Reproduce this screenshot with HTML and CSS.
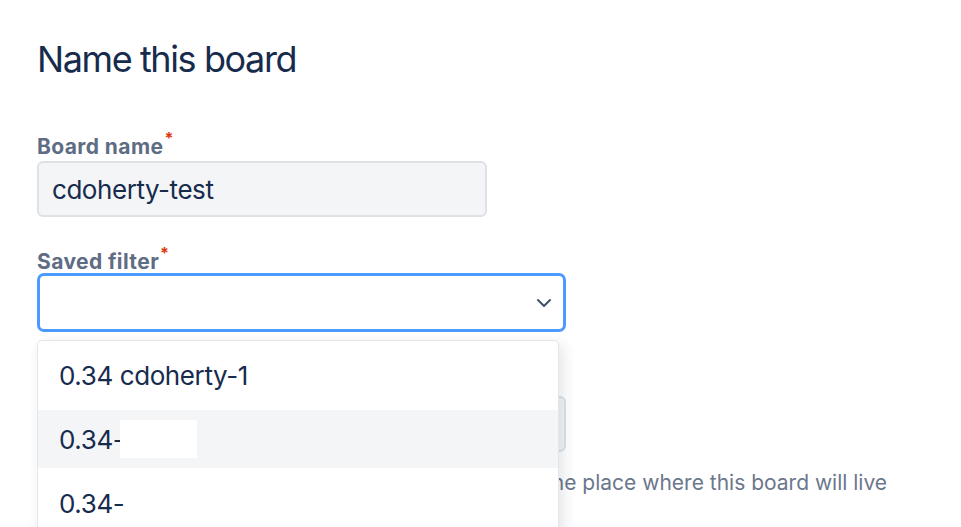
FILE: index.html
```html
<!DOCTYPE html>
<html lang="en">
<head>
    <meta charset="UTF-8">
    <meta name="viewport" content="width=device-width, initial-scale=1.0">
    <title>Create board</title>
    <link rel="stylesheet" href="styles.css">
</head>
<body>
    <div class="page">
        <h1 class="title">Name this board</h1>

        <div class="field field-name">
            <label class="label">Board name<span class="req">*</span></label>
            <div class="input">cdoherty-test</div>
        </div>

        <div class="field field-filter">
            <label class="label">Saved filter<span class="req">*</span></label>
            <div class="select">
                <svg class="chevron" width="16" height="10" viewBox="0 0 16 10">
                    <polyline points="2,2 8,8 14,2" fill="none" stroke="#42526e" stroke-width="2" stroke-linecap="round" stroke-linejoin="round"/>
                </svg>
            </div>

            <!-- open dropdown -->
            <div class="menu">
                <div class="option">0.34 cdoherty-1</div>
                <div class="option active">0.34-<span class="redact"></span></div>
                <div class="option">0.34-</div>
            </div>
        </div>

        <div class="field field-location">
            <label class="label">Location<span class="req">*</span></label>
            <div class="input input-wide"></div>
            <p class="helper">Boards can live in a project or your profile. Choose the place where this board will live</p>
        </div>
    </div>
</body>
</html>
```

FILE: styles.css
```css
/* base */
html, body {
    height: 100%;
}

body {
    margin: 0;
    font-family: Inter, "Noto Sans", sans-serif;
    color: #172b4d;
    background: #fff;
    overflow: hidden;
}

.page {
    padding: 37px 0 0 37px;
}

.title {
    margin: 0;
    font-size: 36px;
    line-height: 44px;
    font-weight: 400;
    letter-spacing: -1.4px;
    color: #172b4d;
}

/* fields */
.field {
    position: relative;
}

.field-name {
    margin-top: 55px;
}

.field-filter {
    margin-top: 34px;
}

.field-location {
    margin-top: 39px;
}

.label {
    display: block;
    font-size: 21px;
    line-height: 22px;
    font-weight: 700;
    letter-spacing: 0.4px;
    color: #5e6c84;
    margin-bottom: 3px;
}

.field-filter .label {
    margin-bottom: 0;
}

.req {
    color: #de350b;
    font-size: 16px;
    line-height: 0;
    vertical-align: 10px;
    margin-left: 1px;
}

.input {
    box-sizing: border-box;
    width: 450px;
    height: 56px;
    padding: 0 13px;
    display: flex;
    align-items: center;
    font-size: 26px;
    letter-spacing: -0.45px;
    background: #f4f5f7;
    border: 2px solid #dfe1e6;
    border-radius: 6px;
    color: #172b4d;
}

.input-wide {
    width: 529px;
}

.select {
    box-sizing: border-box;
    width: 529px;
    height: 59px;
    display: flex;
    align-items: center;
    justify-content: flex-end;
    padding-right: 11px;
    background: #fff;
    border: 3px solid #4c9aff;
    border-radius: 7px;
}

.chevron {
    margin-top: 1px;
}

.helper {
    margin: 19px 0 0;
    font-size: 21px;
    line-height: 24px;
    color: #6b778c;
    white-space: nowrap;
}

/* dropdown menu */
.menu {
    position: absolute;
    left: 0;
    top: calc(100% + 8px);
    z-index: 10;
    box-sizing: border-box;
    width: 522px;
    padding-top: 5px;
    display: flex;
    flex-direction: column;
    gap: 6px;
    background: #fff;
    border: 1px solid #e4e6ea;
    border-radius: 5px;
    box-shadow: 4px 4px 14px rgba(9, 30, 66, 0.12);
}

.option {
    height: 58px;
    padding-left: 21px;
    display: flex;
    align-items: center;
    font-size: 26px;
    letter-spacing: -0.4px;
    color: #172b4d;
}

.option.active {
    background: #f4f5f7;
}

/* blanked-out part of the filter name */
.redact {
    display: inline-block;
    width: 77px;
    height: 38px;
    margin-left: -4px;
    background: #fff;
}
```
